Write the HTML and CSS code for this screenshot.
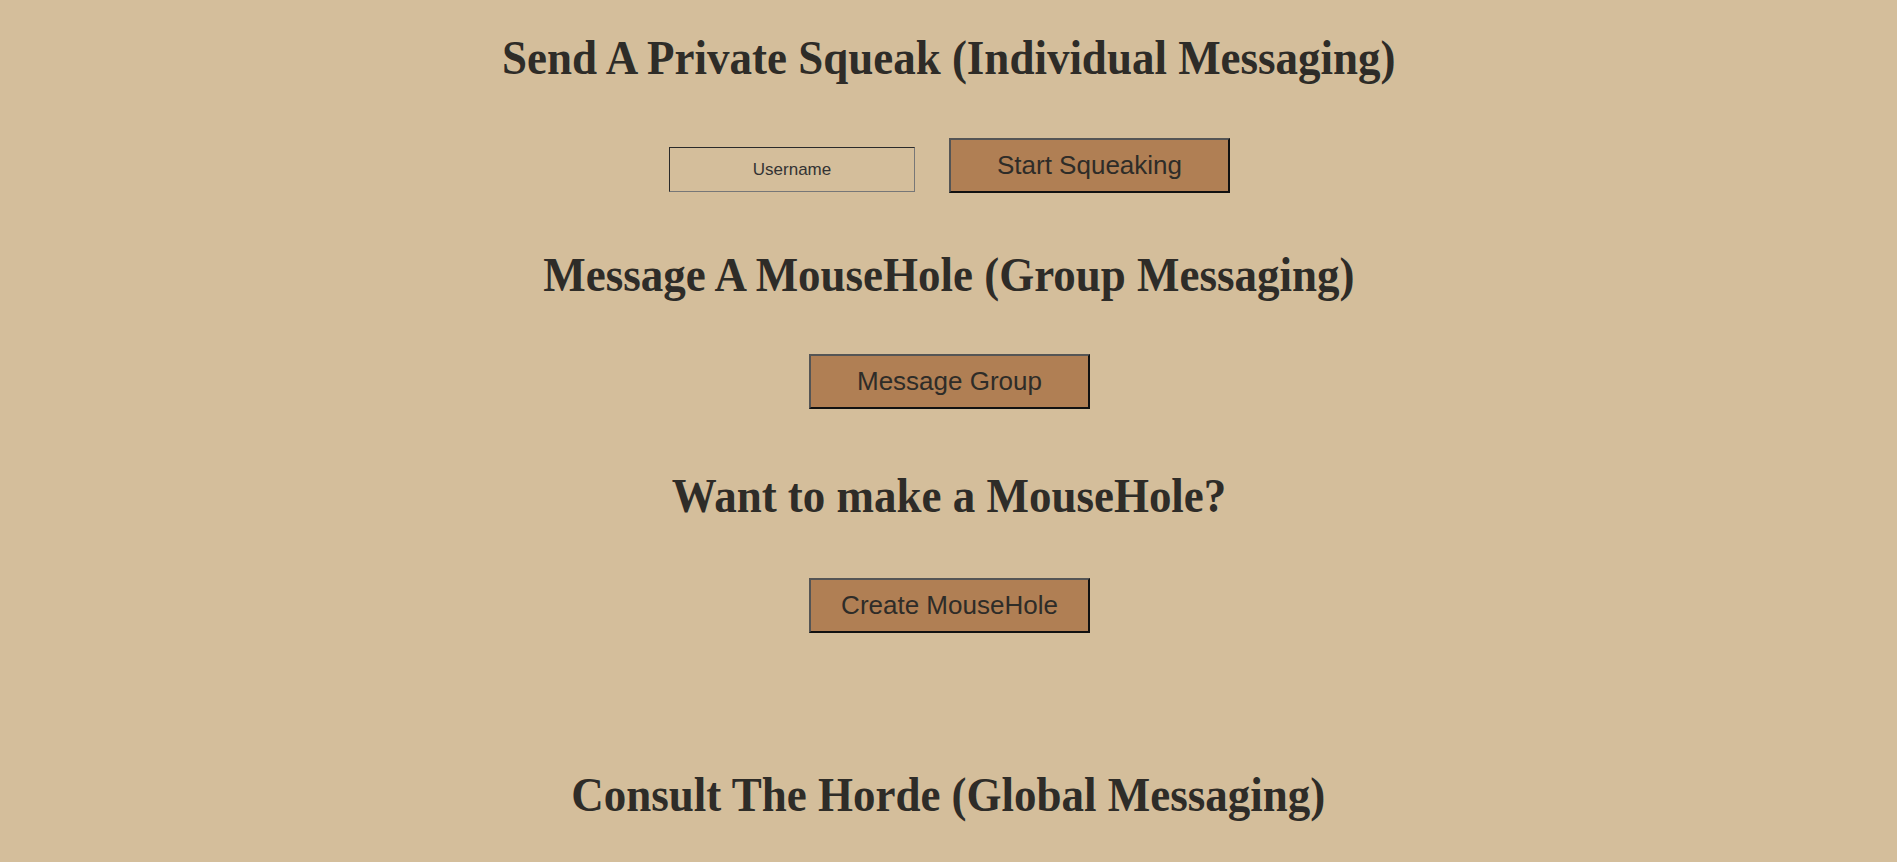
FILE: index.html
```html
<!DOCTYPE html>
<html>
<head>
<meta charset="utf-8">
<title>Squeak</title>
<link rel="stylesheet" href="styles.css">
</head>
<body>
<main class="page">
  <h1 class="title">Send A Private Squeak (Individual Messaging)</h1>
  <div class="row row-first">
    <input class="field" type="text" placeholder="Username">
    <button class="btn">Start Squeaking</button>
  </div>
  <h1 class="title">Message A MouseHole (Group Messaging)</h1>
  <div class="row row-second">
    <button class="btn">Message Group</button>
  </div>
  <h1 class="title">Want to make a MouseHole?</h1>
  <div class="row row-last">
    <button class="btn">Create MouseHole</button>
  </div>
  <h1 class="title">Consult The Horde (Global Messaging)</h1>
</main>
</body>
</html>
```

FILE: styles.css
```css
html, body {
  margin: 0;
  padding: 0;
  background: #d4be9b;
  color: #2e2c28;
}
.page {
  display: flex;
  flex-direction: column;
  align-items: center;
  padding-top: 30px;
}
.title {
  margin: 0;
  font-family: "Liberation Serif", "Times New Roman", serif;
  font-weight: bold;
  font-size: 48px;
  line-height: normal;
  text-align: center;
  transform: scaleX(0.937);
}
.row {
  display: flex;
  align-items: center;
  justify-content: center;
  gap: 34px;
  margin: 55px 0 54px;
  padding-left: 2px;
}
.row-first {
  margin-top: 53px;
}
.row-second {
  margin-top: 52px;
  margin-bottom: 59px;
}
.row-last {
  margin-top: 55px;
  margin-bottom: 134px;
}
.field {
  box-sizing: border-box;
  width: 246px;
  height: 45px;
  margin-top: 8px;
  background: transparent;
  border: 1px solid;
  border-color: #2a2a2a #777 #777 #2a2a2a;
  font-family: "Liberation Sans", Arial, sans-serif;
  font-size: 17px;
  text-align: center;
  color: #2e2c28;
  outline: none;
}
.field::placeholder {
  color: #333;
  opacity: 1;
}
.btn {
  box-sizing: border-box;
  width: 281px;
  height: 55px;
  background: #b07f54;
  border: 2px solid;
  border-color: #555 #111 #111 #555;
  font-family: "Liberation Sans", Arial, sans-serif;
  font-size: 26px;
  color: #2e2c28;
  padding: 0;
}
```
